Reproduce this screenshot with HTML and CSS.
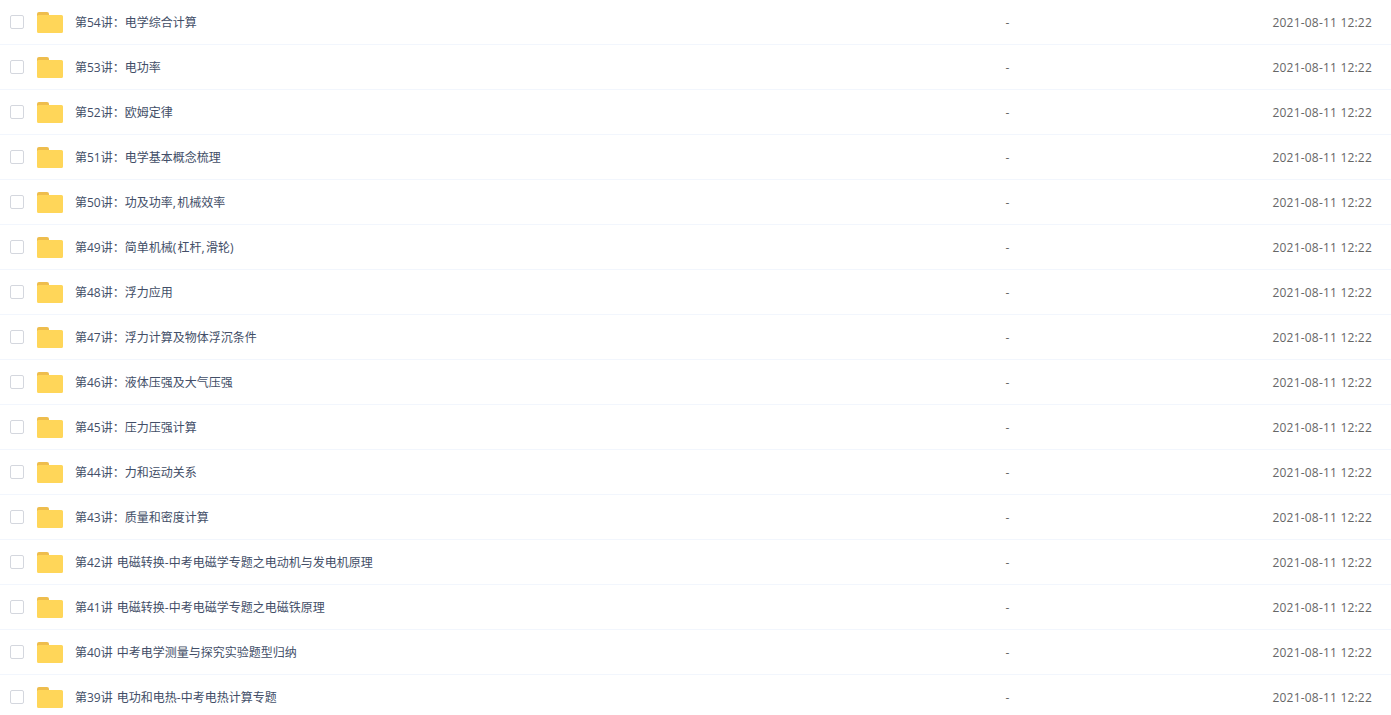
FILE: index.html
```html
<!DOCTYPE html>
<html lang="zh-CN">
<head>
    <meta charset="UTF-8">
    <title>文件列表</title>
    <link rel="stylesheet" href="styles.css">
</head>
<body>
    <svg class="defs" width="0" height="0">
        <symbol id="folder" viewBox="0 0 26 21">
            <path d="M0 2a2 2 0 0 1 2-2h8a2 2 0 0 1 2 2v2H0z" fill="#eebd4d"/>
            <path d="M1.500 3H24.500a1.500 1.500 0 0 1 1.500 1.500V19.500a1.500 1.500 0 0 1-1.500 1.500H1.500A1.500 1.500 0 0 1 0 19.500V4.500A1.500 1.500 0 0 1 1.500 3z" fill="#ffd659"/>
        </symbol>
    </svg>
    <div class="file-list" id="fileList"></div>

    <script>
        const files = [
            '第54讲：电学综合计算',
            '第53讲：电功率',
            '第52讲：欧姆定律',
            '第51讲：电学基本概念梳理',
            '第50讲：功及功率,机械效率',
            '第49讲：简单机械(杠杆,滑轮)',
            '第48讲：浮力应用',
            '第47讲：浮力计算及物体浮沉条件',
            '第46讲：液体压强及大气压强',
            '第45讲：压力压强计算',
            '第44讲：力和运动关系',
            '第43讲：质量和密度计算',
            '第42讲 电磁转换-中考电磁学专题之电动机与发电机原理',
            '第41讲 电磁转换-中考电磁学专题之电磁铁原理',
            '第40讲 中考电学测量与探究实验题型归纳',
            '第39讲 电功和电热-中考电热计算专题'
        ];

        let html = '';
        files.forEach(name => {
            // 標點在參考圖裡比較寬
            const label = name.replace(/[(),]/g, m => `<span class="punct">${m}</span>`);
            html += `
                <div class="file-row">
                    <span class="checkbox"></span>
                    <svg class="folder-icon"><use href="#folder"/></svg>
                    <span class="file-name">${label}</span>
                    <span class="file-size">-</span>
                    <span class="file-date">2021-08-11 12:22</span>
                </div>
            `;
        });
        document.getElementById('fileList').innerHTML = html;
    </script>
</body>
</html>
```

FILE: styles.css
```css
html, body {
    margin: 0;
    height: 715px;
    overflow: hidden;
    background-color: #fff;
}
body {
    font-family: "Open Sans", "Noto Sans CJK SC", sans-serif;
    font-size: 12px;
    color: #424e67;
}
.defs {
    display: block;
    height: 0;
}
.file-row {
    display: flex;
    align-items: center;
    height: 44px;
    padding: 0 19px 0 10px;
    border-bottom: 1px solid #f2f6fd;
}
.checkbox {
    width: 12px;
    height: 12px;
    border: 1px solid #d4d7de;
    border-radius: 2px;
    flex-shrink: 0;
}
.folder-icon {
    width: 26px;
    height: 21px;
    margin-left: 13px;
    margin-top: 1px;
    flex-shrink: 0;
}
.file-name {
    margin-left: 12px;
    flex: 1;
    white-space: nowrap;
    word-spacing: 1px;
}
.punct {
    letter-spacing: 1.3px;
}
.file-size {
    width: 267px;
    color: #666;
}
.file-date {
    color: #666;
    white-space: nowrap;
    letter-spacing: 0.2px;
}
```
